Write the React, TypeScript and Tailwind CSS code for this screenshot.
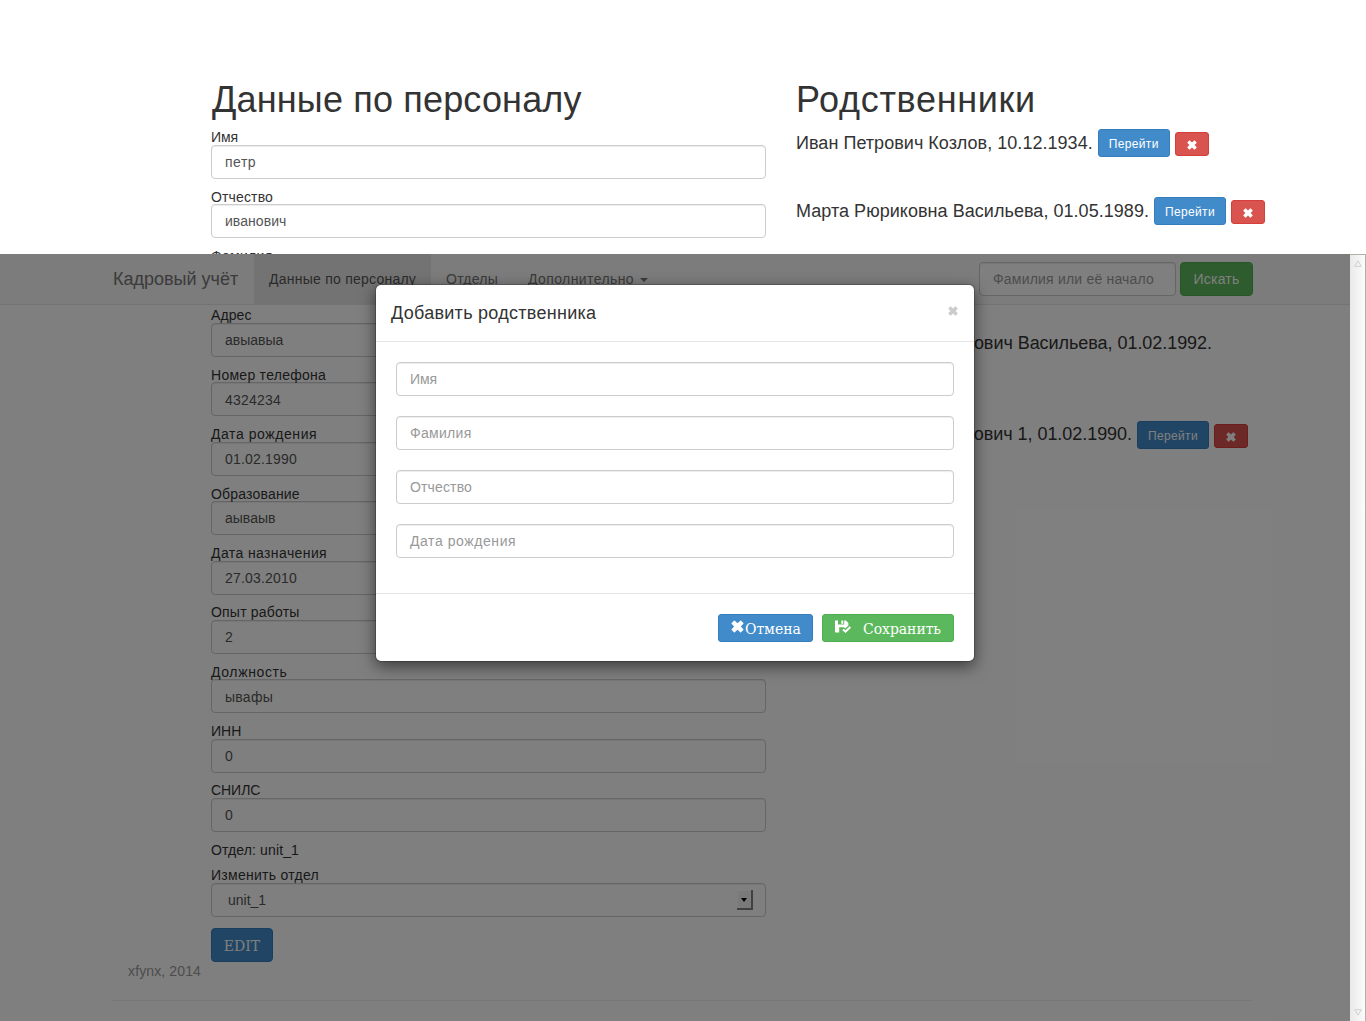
import type { ReactNode } from "react";

const fields = [
  { label: "Имя", value: "петр", track: "tracking-[-0.05px]", vtrack: "tracking-[0.5px]" },
  { label: "Отчество", value: "иванович", track: "tracking-[0.14px]", vtrack: "tracking-[0.05px]" },
  { label: "Фамилия", value: "", track: "tracking-[0.3px]", vtrack: "" },
  { label: "Адрес", value: "авыавыа", track: "tracking-[0.1px]", vtrack: "" },
  { label: "Номер телефона", value: "4324234", track: "tracking-[0.27px]", vtrack: "tracking-[0.2px]" },
  { label: "Дата рождения", value: "01.02.1990", track: "tracking-[0.57px]", vtrack: "tracking-[0.2px]" },
  { label: "Образование", value: "аываыв", track: "tracking-[0.18px]", vtrack: "" },
  { label: "Дата назначения", value: "27.03.2010", track: "tracking-[0.4px]", vtrack: "tracking-[0.2px]" },
  { label: "Опыт работы", value: "2", track: "tracking-[0.2px]", vtrack: "" },
  { label: "Должность", value: "ывафы", track: "tracking-[0.62px]", vtrack: "tracking-[0.26px]" },
  { label: "ИНН", value: "0", track: "", vtrack: "" },
  { label: "СНИЛС", value: "0", track: "tracking-[-0.05px]", vtrack: "" },
];

const inputClass =
  "flex h-[34px] items-start rounded-[4px] border border-[#ccc] bg-white px-[13px] pt-[6.3px] whitespace-nowrap shadow-[inset_0_1px_1px_rgba(0,0,0,0.075)]";

function RemoveIcon({ size, className }: { size: number; className?: string }) {
  return (
    <svg width={size} height={size} viewBox="0 0 12 12" fill="currentColor" className={className}>
      <path d="M2.7.6Q3.1.2 3.5.6L6 2.9 8.5.6Q8.9.2 9.3.6L11.4 2.7Q11.8 3.1 11.4 3.5L9.1 6 11.4 8.5Q11.8 8.9 11.4 9.3L9.3 11.4Q8.9 11.8 8.5 11.4L6 9.1 3.5 11.4Q3.1 11.8 2.7 11.4L.6 9.3Q.2 8.9.6 8.5L2.9 6 .6 3.5Q.2 3.1.6 2.7Z" />
    </svg>
  );
}

function FloppySavedIcon() {
  return (
    <svg width="16" height="15" viewBox="0 0 16 15" fill="currentColor">
      <path d="M0 .5H3V4.6H9.2V.5H10.9L13.4 2.9V5.6L10.4 8.4 8.9 7.2H4.2V12.6H.5L0 12.1Z" />
      <path d="M6.3.5H8.3V3.8H6.3Z" />
      <path d="M14.6 6.3 16 7.7 10.6 13.1 7.3 10.2 8.7 8.7 10.6 10.3Z" />
    </svg>
  );
}

function RelativeButtons() {
  return (
    <>
      <span className="ml-[5px] flex h-7 w-[72px] shrink-0 items-center justify-center rounded-[3px] border border-[#357ebd] bg-[#428bca] pt-px text-xs tracking-[0.35px] text-white">
        Перейти
      </span>
      <span className="mt-[2px] ml-[5px] flex h-6 w-[34px] shrink-0 items-center justify-center rounded-[3px] border border-[#d43f3a] bg-[#d9534f] pt-[2px] text-white">
        <RemoveIcon size={10} />
      </span>
    </>
  );
}

function Relative({ className, children, buttons = true }: { className: string; children: ReactNode; buttons?: boolean }) {
  return (
    <div className={"flex h-7 items-center text-lg whitespace-nowrap " + className}>
      {children}
      {buttons && <RelativeButtons />}
    </div>
  );
}

function NavBar() {
  return (
    <div className="absolute top-[254px] left-0 flex h-[51px] w-[1350px] border-b border-[#e7e7e7] bg-[#f8f8f8] pl-[98px] text-[#777]">
      <div className="flex w-[156px] items-center pl-[15px] text-lg">Кадровый учёт</div>
      <div className="flex w-[177px] items-center bg-[#e7e7e7] pl-[15px] tracking-[0.24px] text-[#555]">Данные по персоналу</div>
      <div className="flex w-[82px] items-center pl-[15px] tracking-[0.24px]">Отделы</div>
      <div className="flex w-[140px] items-center pl-[15px]">
        <span className="tracking-[0.4px]">Дополнительно</span>
        <span className="mt-px ml-[6px] border-x-4 border-t-4 border-x-transparent border-t-[#777]" />
      </div>
      <div className="ml-auto flex w-[371px] items-center">
        <div className={inputClass + " w-[197px] tracking-[0.2px] text-[#999]"}>Фамилия или её начало</div>
        <div className="ml-1 flex h-[34px] w-[73px] items-center justify-center rounded-[4px] border border-[#4cae4c] bg-[#5cb85c] tracking-[0.22px] text-white">
          Искать
        </div>
      </div>
    </div>
  );
}

function Modal() {
  const inputs = [
    { text: "Имя", track: "tracking-[-0.05px]" },
    { text: "Фамилия", track: "tracking-[0.3px]" },
    { text: "Отчество", track: "tracking-[0.14px]" },
    { text: "Дата рождения", track: "tracking-[0.57px]" },
  ];
  return (
    <div className="absolute top-[284px] left-[375px] flex h-[378px] w-[600px] flex-col rounded-[6px] border border-black/20 bg-white bg-clip-padding shadow-[0_5px_15px_rgba(0,0,0,0.5)]">
      <div className="flex h-[57px] shrink-0 justify-between border-b border-[#e5e5e5] pr-4 pl-[15px]">
        <span className="pt-[15px] text-lg leading-[26px] tracking-[0.28px] text-[#333]">Добавить родственника</span>
        <RemoveIcon size={10} className="mt-[21px] text-[#ccc]" />
      </div>
      <div className="flex h-[252px] shrink-0 flex-col gap-5 border-b border-[#e5e5e5] px-5 pt-5">
        {inputs.map((f) => (
          <div key={f.text} className={inputClass + " text-[#999] " + f.track}>
            {f.text}
          </div>
        ))}
      </div>
      <div className="flex justify-end gap-[9px] px-5 pt-5 font-['DejaVu_Serif',serif] text-white">
        <div className="flex h-7 w-[95px] items-center rounded-[3px] border border-[#357ebd] bg-[#428bca] pl-[13px]">
          <RemoveIcon size={13} className="-mt-[3px] -ml-px" />
          <span className="ml-px pt-px tracking-[-0.05px]">Отмена</span>
        </div>
        <div className="flex h-7 w-[132px] items-center rounded-[3px] border border-[#4cae4c] bg-[#5cb85c] pl-3">
          <span className="-mt-px w-7">
            <FloppySavedIcon />
          </span>
          <span className="pt-px tracking-[-0.05px]">Сохранить</span>
        </div>
      </div>
    </div>
  );
}

function Scrollbar() {
  return (
    <div className="absolute top-[254px] right-0 flex h-[767px] w-4 flex-col items-center justify-between border-t border-r border-[#b5aea6] bg-linear-to-r from-[#e9e9e9] to-[#fcfcfc] py-[5px]">
      <svg width="8" height="7" viewBox="0 0 8 7" fill="none" stroke="#cfcfcf">
        <path d="M4 .8 7.3 6.3H.7Z" />
      </svg>
      <svg width="8" height="7" viewBox="0 0 8 7" fill="none" stroke="#cfcfcf">
        <path d="M4 6.2 7.3.7H.7Z" />
      </svg>
    </div>
  );
}

export default function App() {
  return (
    <div className="relative h-[1021px] w-[1366px] overflow-hidden bg-white font-['Liberation_Sans',Arial,sans-serif] text-sm leading-5 text-[#333]">
      <div className="flex h-[961px] gap-[30px] pt-[80px] pl-[211px]">
        <div className="w-[555px]">
          <h1 className="h-[47.2px] pl-px text-[36px] leading-10 tracking-[0.17px] whitespace-nowrap">Данные по персоналу</h1>
          {fields.map((f) => (
            <div key={f.label} className="h-[59.4px]">
              <div className={"h-[17.6px] " + f.track}>{f.label}</div>
              <div className={inputClass + " text-[#555] " + f.vtrack}>{f.value}</div>
            </div>
          ))}
          <div className="h-[25px] tracking-[0.12px]">Отдел: unit_1</div>
          <div className="h-[18px] tracking-[0.28px]">Изменить отдел</div>
          <div className={inputClass + " justify-between text-[#555]"}>
            <span className="pl-[3px]">unit_1</span>
            <span className="-mr-px flex h-5 w-4 items-center justify-center border-r-2 border-b-2 border-[#808080] bg-[#f4f4f4] pt-px shadow-[inset_1px_1px_0_#fff]">
              <span className="border-x-[3px] border-t-[4px] border-x-transparent border-t-black" />
            </span>
          </div>
          <div className="mt-[11px] flex h-[34px] w-[62px] items-center justify-center rounded-[4px] border border-[#357ebd] bg-[#428bca] pt-[2px] font-['DejaVu_Serif',serif] text-white">
            EDIT
          </div>
        </div>
        <div className="w-[540px]">
          <h1 className="h-[49px] text-[36px] leading-10 tracking-[0.68px]">Родственники</h1>
          <Relative className="mb-10 tracking-[0.035px]">Иван Петрович Козлов, 10.12.1934.</Relative>
          <Relative className="mb-[104px] tracking-[0.04px]">Марта Рюриковна Васильева, 01.05.1989.</Relative>
          <Relative className="w-[416px] justify-end tracking-[-0.05px]" buttons={false}>
            Рюрикович Васильева, 01.02.1992.
          </Relative>
          <Relative className="mt-[64px] w-[452px] justify-end tracking-[-0.05px]">
            <span className="pb-[2px]">Петрович 1, 01.02.1990.</span>
          </Relative>
        </div>
      </div>
      <div className="ml-[113px] h-10 w-[1140px] border-b border-[#eee] pl-[15px] tracking-[0.13px] text-[#999]">xfynx, 2014</div>
      <NavBar />
      <div className="absolute top-[254px] left-0 h-[767px] w-[1350px] bg-black/50" />
      <Modal />
      <Scrollbar />
    </div>
  );
}
